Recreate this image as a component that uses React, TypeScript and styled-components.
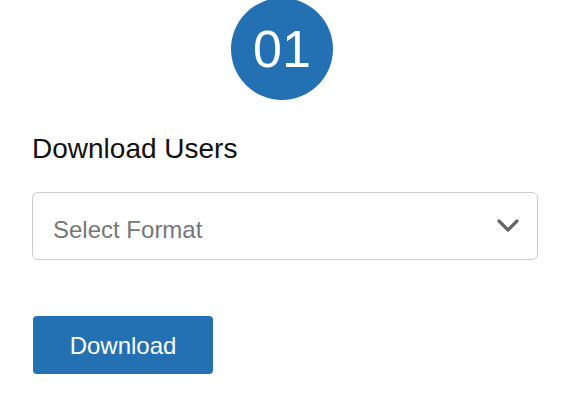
import React from "react";
import styled, { createGlobalStyle } from "styled-components";

const Global = createGlobalStyle`
  html, body { margin: 0; padding: 0; background: #ffffff; }
  body { font-family: "Liberation Sans", Arial, sans-serif; }
`;

const Page = styled.div`
  width: 506px;
  padding: 0 28px 0 32px;
  display: flex;
  flex-direction: column;
`;

const Badge = styled.div`
  align-self: center;
  width: 102px;
  height: 102px;
  margin-top: -2px;
  margin-left: -6px;
  border-radius: 50%;
  background: #2371b3;
  color: #ffffff;
  font-size: 52px;
  display: flex;
  align-items: center;
  justify-content: center;
`;

const Heading = styled.h2`
  margin: 33px 0 0;
  font-size: 28px;
  font-weight: 400;
  line-height: 32px;
  color: #111111;
`;

const SelectBox = styled.div`
  margin-top: 27px;
  height: 66px;
  border: 1px solid #cccccc;
  border-radius: 6px;
  display: flex;
  align-items: center;
  justify-content: space-between;
  padding: 0 18px 0 20px;
  color: #777777;
  font-size: 24px;
`;

const Placeholder = styled.span`
  padding-top: 8px;
`;

const Chevron = styled.svg`
  width: 22px;
  height: 14px;
`;

const Button = styled.button`
  margin-top: 56px;
  align-self: flex-start;
  width: 180px;
  height: 58px;
  border: none;
  border-radius: 4px;
  background: #2371b3;
  color: #ffffff;
  font-family: "Liberation Sans", Arial, sans-serif;
  font-size: 24px;
  padding-top: 2px;
  margin-left: 1px;
`;

export default function App() {
  return (
    <>
      <Global />
      <Page>
        <Badge>01</Badge>
        <Heading>Download Users</Heading>
        <SelectBox>
          <Placeholder>Select Format</Placeholder>
          <Chevron viewBox="0 0 22 14">
            <path d="M2 2 L11 11 L20 2" fill="none" stroke="#666666" strokeWidth="3.2" strokeLinecap="round" strokeLinejoin="round" />
          </Chevron>
        </SelectBox>
        <Button>Download</Button>
      </Page>
    </>
  );
}
